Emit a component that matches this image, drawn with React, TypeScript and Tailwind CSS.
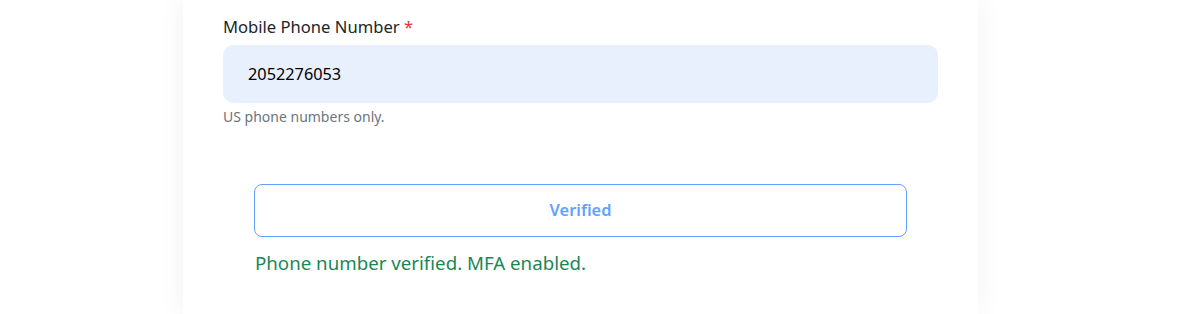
export default function App() {
  return (
    <div className="w-[1185px] h-[314px] bg-white overflow-hidden" style={{ fontFamily: '"Noto Sans", "Open Sans", sans-serif' }}>
      <div className="ml-[183px] w-[795px] h-[314px] bg-white shadow-[0_0_28px_rgba(0,0,0,0.06)] pt-[15px] px-[40px]">
        <label className="block text-[16.6px] leading-[24px] text-[#212529] mb-[6px]">
          Mobile Phone Number <span className="text-[#dc3545]">*</span>
        </label>
        <div className="h-[58px] rounded-[10px] bg-[#e8f0fe] flex items-center pl-[25px] text-[16.3px] text-black">
          2052276053
        </div>
        <div className="mt-[4px] text-[14px] leading-[20px] text-[#6c757d]">US phone numbers only.</div>
        <div className="px-[31px] mt-[57px]">
          <div className="h-[53px] rounded-[8px] border border-[#62a1fe] flex items-center justify-center text-[16.4px] font-semibold text-[#62a1fe]">
            Verified
          </div>
          <div className="mt-[12px] text-[18.7px] leading-[27px] text-[#198754] pl-[1px]">
            Phone number verified. MFA enabled.
          </div>
        </div>
      </div>
    </div>
  );
}
